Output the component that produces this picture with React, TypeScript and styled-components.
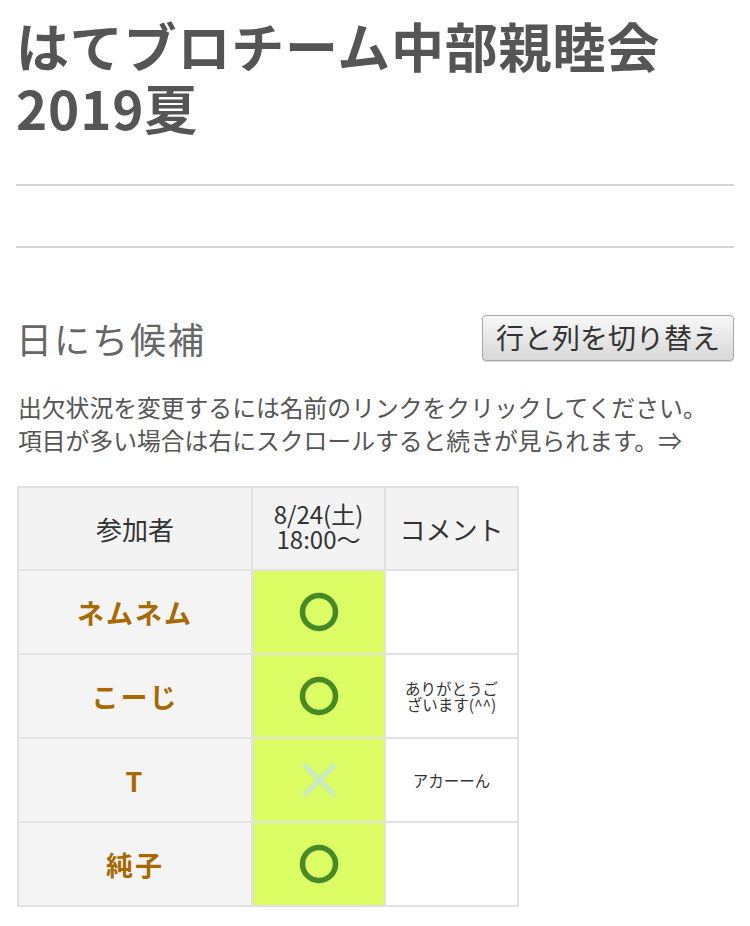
import styled, { createGlobalStyle } from 'styled-components'

const GlobalStyle = createGlobalStyle`
  body {
    margin: 0;
    background: #fff;
    font-family: "Noto Sans CJK JP", "Noto Sans", sans-serif;
    color: #333;
  }
`;

const Page = styled.div`
  padding: 14px 16px 20px;
`;

const Title = styled.h1`
  margin: 0;
  font-size: 53px;
  line-height: 62px;
  font-weight: bold;
  color: #555;
  letter-spacing: 0.8px;
`;

const Rule = styled.hr`
  margin: 0;
  border: none;
  border-top: 2px solid #d4d4d4;
`;

const Rules = styled.div`
  margin-top: 46px;
  display: flex;
  flex-direction: column;
  row-gap: 60px;
`;

const SectionHead = styled.div`
  margin-top: 64px;
  display: flex;
  align-items: center;
  justify-content: space-between;
`;

const SectionTitle = styled.h2`
  margin: 0;
  font-size: 36px;
  font-weight: normal;
  color: #666;
  letter-spacing: 2px;
`;

const SwitchButton = styled.button`
  font-family: "Noto Sans CJK JP", sans-serif;
  font-size: 28px;
  line-height: 41px;
  color: #333;
  padding: 1px 13px 2px;
  border: 1px solid #a8a8a8;
  border-radius: 4px;
  background: linear-gradient(#f8f8f8, #e4e4e4 60%, #d8d8d8);
  box-shadow: 0 1px 1px rgba(0, 0, 0, 0.15);
`;

const Note = styled.p`
  margin: 26px 0 30px 2px;
  font-size: 23.8px;
  line-height: 33px;
  color: #555;
`;

const Table = styled.table`
  border-collapse: collapse;
  margin-left: 1px;
`;

const HeadCell = styled.th<{ $w: number }>`
  width: ${p => p.$w}px;
  height: 81px;
  padding: 0;
  border: 2px solid #e2e2e2;
  background: #f3f3f3;
  font-weight: normal;
  font-size: 26px;
  color: #333;
`;

const DateLabel = styled.div`
  font-size: 24px;
  line-height: 25px;
  margin-top: -6px;
`;

const NameCell = styled.td`
  height: 82px;
  padding: 0;
  border: 2px solid #e2e2e2;
  background: #f4f4f4;
  text-align: center;
  font-size: 27px;
  font-weight: bold;
  color: #a86900;
  letter-spacing: 2px;
`;

const MarkCell = styled.td`
  padding: 0;
  border: 2px solid #e2e2e2;
  background: #dbfc62;
  text-align: center;
  vertical-align: middle;
`;

const CommentCell = styled.td`
  padding: 0 12px;
  border: 2px solid #e2e2e2;
  background: #fff;
  text-align: center;
  font-size: 15.5px;
  line-height: 16px;
  color: #333;
`;

const MarkIcon = styled.svg`
  display: block;
  margin: 0 auto;
`;

function Mark({ ok }: { ok: boolean }) {
  if (ok) {
    return (
      <MarkIcon width="40" height="40" viewBox="0 0 40 40">
        <circle cx="20" cy="20" r="16.5" fill="none" stroke="#468a27" strokeWidth="5.5" />
      </MarkIcon>
    )
  }
  return (
    <MarkIcon width="40" height="40" viewBox="0 0 40 40">
      <path d="M6 6 L34 34 M34 6 L6 34" stroke="#c8ebc4" strokeWidth="5" strokeLinecap="round" />
    </MarkIcon>
  )
}

const rows = [
  { name: 'ネムネム', ok: true, comment: '' },
  { name: 'こーじ', ok: true, comment: 'ありがとうございます(^^)' },
  { name: 'T', ok: false, comment: 'アカーーん' },
  { name: '純子', ok: true, comment: '' },
]

export default function App() {
  return (
    <Page>
      <GlobalStyle />
      <Title>はてブロチーム中部親睦会2019夏</Title>
      <Rules>
        <Rule />
        <Rule />
      </Rules>
      <SectionHead>
        <SectionTitle>日にち候補</SectionTitle>
        <SwitchButton>行と列を切り替え</SwitchButton>
      </SectionHead>
      <Note>
        出欠状況を変更するには名前のリンクをクリックしてください。<br />
        項目が多い場合は右にスクロールすると続きが見られます。⇒
      </Note>
      <Table>
        <thead>
          <tr>
            <HeadCell $w={232}>参加者</HeadCell>
            <HeadCell $w={131}>
              <DateLabel>8/24(土)<br />18:00〜</DateLabel>
            </HeadCell>
            <HeadCell $w={131}>コメント</HeadCell>
          </tr>
        </thead>
        <tbody>
          {rows.map(r => (
            <tr key={r.name}>
              <NameCell>{r.name}</NameCell>
              <MarkCell><Mark ok={r.ok} /></MarkCell>
              <CommentCell>{r.comment}</CommentCell>
            </tr>
          ))}
        </tbody>
      </Table>
    </Page>
  )
}
